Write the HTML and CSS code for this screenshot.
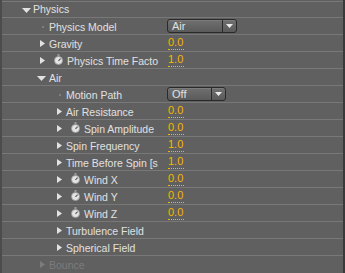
FILE: index.html
```html
<!DOCTYPE html>
<html>
<head>
<meta charset="utf-8">
<link rel="stylesheet" href="styles.css">
</head>
<body>
<div class="panel">
  <div class="row first">
    <div class="namecol l0"><span class="tw"><svg class="down" width="9" height="5" viewBox="0 0 9 5"><polygon points="0,0 9,0 4.5,5"/></svg></span><span class="name">Physics</span></div>
  </div>
  <div class="row">
    <div class="namecol l1"><span class="tw"><i class="dot"></i></span><span class="name">Physics Model</span></div>
    <div class="val"><span class="dd air"><span class="dd-label">Air</span><span class="dd-btn"><svg width="7" height="4" viewBox="0 0 7 4"><polygon points="0,0 7,0 3.5,4"/></svg></span></span></div>
  </div>
  <div class="row">
    <div class="namecol l1"><span class="tw"><svg class="right" width="5" height="7" viewBox="0 0 5 7"><polygon points="0,0 5,3.5 0,7"/></svg></span><span class="name">Gravity</span></div>
    <div class="val"><span class="num">0.0</span></div>
  </div>
  <div class="row">
    <div class="namecol l1"><span class="tw"><svg class="right" width="5" height="7" viewBox="0 0 5 7"><polygon points="0,0 5,3.5 0,7"/></svg></span><svg class="sw" width="9" height="11" viewBox="0 0 9 11"><rect x="3.5" y="0" width="2" height="2" fill="#9a9a9a"/><circle cx="4.5" cy="6.5" r="4" fill="#e4e4e4"/><circle cx="4.5" cy="6.5" r="4" fill="none" stroke="#9a9a9a" stroke-width="0.8"/><path d="M4.5 6.8 L6.6 4.6" stroke="#555" stroke-width="1.1"/></svg><span class="name">Physics Time Facto</span></div>
    <div class="val"><span class="num">1.0</span></div>
  </div>
  <div class="row">
    <div class="namecol l1"><span class="tw"><svg class="down" width="9" height="5" viewBox="0 0 9 5"><polygon points="0,0 9,0 4.5,5"/></svg></span><span class="name">Air</span></div>
  </div>
  <div class="row">
    <div class="namecol l2"><span class="tw"><i class="dot"></i></span><span class="name">Motion Path</span></div>
    <div class="val"><span class="dd off"><span class="dd-label">Off</span><span class="dd-btn"><svg width="7" height="4" viewBox="0 0 7 4"><polygon points="0,0 7,0 3.5,4"/></svg></span></span></div>
  </div>
  <div class="row">
    <div class="namecol l2"><span class="tw"><svg class="right" width="5" height="7" viewBox="0 0 5 7"><polygon points="0,0 5,3.5 0,7"/></svg></span><span class="name">Air Resistance</span></div>
    <div class="val"><span class="num">0.0</span></div>
  </div>
  <div class="row">
    <div class="namecol l2"><span class="tw"><svg class="right" width="5" height="7" viewBox="0 0 5 7"><polygon points="0,0 5,3.5 0,7"/></svg></span><svg class="sw" width="9" height="11" viewBox="0 0 9 11"><rect x="3.5" y="0" width="2" height="2" fill="#9a9a9a"/><circle cx="4.5" cy="6.5" r="4" fill="#e4e4e4"/><circle cx="4.5" cy="6.5" r="4" fill="none" stroke="#9a9a9a" stroke-width="0.8"/><path d="M4.5 6.8 L6.6 4.6" stroke="#555" stroke-width="1.1"/></svg><span class="name">Spin Amplitude</span></div>
    <div class="val"><span class="num">0.0</span></div>
  </div>
  <div class="row">
    <div class="namecol l2"><span class="tw"><svg class="right" width="5" height="7" viewBox="0 0 5 7"><polygon points="0,0 5,3.5 0,7"/></svg></span><span class="name">Spin Frequency</span></div>
    <div class="val"><span class="num">1.0</span></div>
  </div>
  <div class="row">
    <div class="namecol l2"><span class="tw"><svg class="right" width="5" height="7" viewBox="0 0 5 7"><polygon points="0,0 5,3.5 0,7"/></svg></span><span class="name">Time Before Spin [s</span></div>
    <div class="val"><span class="num">1.0</span></div>
  </div>
  <div class="row">
    <div class="namecol l2"><span class="tw"><svg class="right" width="5" height="7" viewBox="0 0 5 7"><polygon points="0,0 5,3.5 0,7"/></svg></span><svg class="sw" width="9" height="11" viewBox="0 0 9 11"><rect x="3.5" y="0" width="2" height="2" fill="#9a9a9a"/><circle cx="4.5" cy="6.5" r="4" fill="#e4e4e4"/><circle cx="4.5" cy="6.5" r="4" fill="none" stroke="#9a9a9a" stroke-width="0.8"/><path d="M4.5 6.8 L6.6 4.6" stroke="#555" stroke-width="1.1"/></svg><span class="name">Wind X</span></div>
    <div class="val"><span class="num">0.0</span></div>
  </div>
  <div class="row">
    <div class="namecol l2"><span class="tw"><svg class="right" width="5" height="7" viewBox="0 0 5 7"><polygon points="0,0 5,3.5 0,7"/></svg></span><svg class="sw" width="9" height="11" viewBox="0 0 9 11"><rect x="3.5" y="0" width="2" height="2" fill="#9a9a9a"/><circle cx="4.5" cy="6.5" r="4" fill="#e4e4e4"/><circle cx="4.5" cy="6.5" r="4" fill="none" stroke="#9a9a9a" stroke-width="0.8"/><path d="M4.5 6.8 L6.6 4.6" stroke="#555" stroke-width="1.1"/></svg><span class="name">Wind Y</span></div>
    <div class="val"><span class="num">0.0</span></div>
  </div>
  <div class="row">
    <div class="namecol l2"><span class="tw"><svg class="right" width="5" height="7" viewBox="0 0 5 7"><polygon points="0,0 5,3.5 0,7"/></svg></span><svg class="sw" width="9" height="11" viewBox="0 0 9 11"><rect x="3.5" y="0" width="2" height="2" fill="#9a9a9a"/><circle cx="4.5" cy="6.5" r="4" fill="#e4e4e4"/><circle cx="4.5" cy="6.5" r="4" fill="none" stroke="#9a9a9a" stroke-width="0.8"/><path d="M4.5 6.8 L6.6 4.6" stroke="#555" stroke-width="1.1"/></svg><span class="name">Wind Z</span></div>
    <div class="val"><span class="num">0.0</span></div>
  </div>
  <div class="row">
    <div class="namecol l2"><span class="tw"><svg class="right" width="5" height="7" viewBox="0 0 5 7"><polygon points="0,0 5,3.5 0,7"/></svg></span><span class="name">Turbulence Field</span></div>
  </div>
  <div class="row">
    <div class="namecol l2"><span class="tw"><svg class="right" width="5" height="7" viewBox="0 0 5 7"><polygon points="0,0 5,3.5 0,7"/></svg></span><span class="name">Spherical Field</span></div>
  </div>
  <div class="row disabled">
    <div class="namecol l1"><span class="tw"><svg class="right" width="5" height="7" viewBox="0 0 5 7"><polygon points="0,0 5,3.5 0,7"/></svg></span><span class="name">Bounce</span></div>
  </div>
</div>
</body>
</html>
```
FILE: styles.css
```css
html, body {
  margin: 0;
  padding: 0;
  background: #606060;
}
.panel {
  width: 341px;
  height: 273px;
  overflow: hidden;
  background: #606060;
  border-left: 2px solid #4c4c4c;
  border-right: 2px solid #3a3a3a;
  font-family: "Liberation Sans", Arial, sans-serif;
  font-size: 10.5px;
  color: #e0e0e0;
}
.row {
  display: flex;
  align-items: center;
  height: 16px;
  border-top: 1px solid #787878;
}
.row.first {
  border-top: none;
  height: 17px;
  background: linear-gradient(to bottom, transparent 1px, #787878 1px, #787878 2px, transparent 2px);
}
.namecol {
  display: flex;
  align-items: center;
  width: 166px;
  flex: none;
  height: 100%;
  white-space: nowrap;
  overflow: hidden;
  box-sizing: border-box;
}
.l0 { padding-left: 19px; }
.l1 { padding-left: 35px; }
.l2 { padding-left: 52px; }
.tw {
  display: flex;
  align-items: center;
  width: 12px;
  height: 100%;
  flex: none;
}
.tw svg { fill: #e2e2e2; display: block; }
.tw .right { margin-left: 3px; }
.tw .down { margin-left: 0; margin-top: 2px; }
.first .tw .down { margin-left: 1px; margin-top: 3px; }
.dot {
  display: block;
  width: 2px;
  height: 2px;
  margin-left: 5px;
  margin-top: 2px;
  background: #7e7e7e;
}
.sw {
  flex: none;
  display: block;
  margin-left: 5px;
  margin-right: 4px;
  margin-top: -1px;
}
.name {
  line-height: 16px;
  padding-top: 1px;
}
.val {
  display: flex;
  align-items: flex-start;
  height: 100%;
}
.num {
  display: block;
  color: #f7b500;
  line-height: 14px;
  border-bottom: 1px dotted #f7b500;
  font-size: 11px;
  padding-right: 1px;
}
.dd {
  display: flex;
  margin-left: -1px;
  margin-top: 1px;
  height: 12px;
  border: 1px solid #2a2a2a;
  border-radius: 3px;
  background: linear-gradient(to bottom, #707070, #5a5a5a);
  box-shadow: inset 0 1px 0 #7c7c7c;
}
.dd.air { width: 68px; }
.dd.off { width: 57px; }
.dd-label {
  flex: 1;
  padding-left: 4px;
  line-height: 12px;
  color: #e0e0e0;
  font-size: 11px;
}
.dd-btn {
  width: 13px;
  border-left: 1px solid #2a2a2a;
  display: flex;
  align-items: center;
  justify-content: center;
}
.dd-btn svg { fill: #ececec; display: block; }
.disabled .name { color: #7c7c7c; }
.disabled .tw svg { fill: #7c7c7c; }
```
